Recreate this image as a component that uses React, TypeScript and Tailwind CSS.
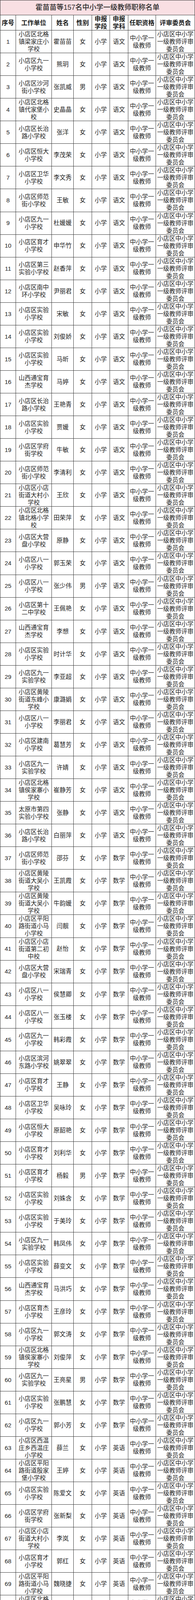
import React from "react";

type Row = [string, string, string, string];

const rows: Row[] = [
  ["小店区北格镇梁家庄小学校", "霍苗苗", "女", "语文"],
  ["小店区九一小学校", "熊玥", "女", "语文"],
  ["小店区沙河街小学校", "张凯威", "男", "语文"],
  ["小店区北格镇代家堡小校", "史晶晶", "女", "语文"],
  ["小店区长治路小学校", "张洋", "女", "语文"],
  ["小店区恒大小学校", "李茂荣", "女", "语文"],
  ["小店区卫华小学校", "李文秀", "女", "语文"],
  ["小店区师范街小学校", "王敏", "女", "语文"],
  ["小店区九一小学校", "杜媛媛", "女", "语文"],
  ["小店区育才小学校", "申华竹", "女", "语文"],
  ["小店区第三实验小学校", "赵香萍", "女", "语文"],
  ["小店区南中环小学校", "尹丽君", "女", "语文"],
  ["小店区实验小学校", "宋敏", "女", "语文"],
  ["小店区实验小学校", "刘俊娇", "女", "语文"],
  ["小店区实验小学校", "马昕", "女", "语文"],
  ["山西通宝育杰学校", "马婷", "女", "语文"],
  ["小店区长治路小学校", "王艳青", "女", "语文"],
  ["小店区实验小学校", "贾媛", "女", "语文"],
  ["小店区学府街学校", "牛敏", "女", "语文"],
  ["小店区师范街小学校", "李清利", "女", "语文"],
  ["小店区小店街道大村小学校", "王欣", "女", "语文"],
  ["小店区北格镇北格小学校", "田荣萍", "女", "语文"],
  ["小店区大营盘小学校", "原静", "女", "语文"],
  ["小店区八一小学校", "郭玉荣", "女", "语文"],
  ["小店区八一小学校", "张少伟", "男", "语文"],
  ["小店区第十二中学校", "王佩艳", "女", "语文"],
  ["山西通宝育杰学校", "李想", "女", "语文"],
  ["小店区实验小学校", "时计华", "女", "语文"],
  ["小店区九一实验学校", "李亚超", "女", "语文"],
  ["小店区黄陵街道东峰小学校", "康潞娟", "女", "语文"],
  ["小店区八一小学校", "李丽君", "女", "语文"],
  ["小店区建南小学校", "葛慧芳", "女", "语文"],
  ["小店区九一实验学校", "许婧", "女", "语文"],
  ["小店区北格镇侯家寨小学校", "崔静芳", "女", "语文"],
  ["太原市第四实验小学校", "张静", "女", "语文"],
  ["小店区长治路小学校", "白丽萍", "女", "语文"],
  ["小店区师范街小学校", "邵芬", "女", "数学"],
  ["小店区黄陵街道大吴小学校", "王凯霞", "女", "数学"],
  ["小店区黄陵街道大吴小学校", "牛韵媛", "女", "数学"],
  ["小店区平阳路街道小马小学校", "闫靓", "女", "数学"],
  ["小店区小店街道第二初中校", "赵怡", "女", "数学"],
  ["小店区大营盘小学校", "宋瑞青", "女", "数学"],
  ["小店区八一小学校", "侯慧卿", "女", "数学"],
  ["小店区八一小学校", "张玉楼", "女", "数学"],
  ["小店区九一小学校", "韩彩霞", "女", "数学"],
  ["小店区滨河东路小学校", "姚翠翠", "女", "数学"],
  ["小店区育才小学校", "王静", "女", "数学"],
  ["小店区卫华小学校", "吴咏玲", "女", "数学"],
  ["小店区恒大小学校", "原韶艳", "女", "数学"],
  ["小店区育才小学校", "刘利华", "女", "数学"],
  ["小店区育才小学校", "杨毅", "男", "数学"],
  ["小店区实验小学校", "刘姝含", "女", "数学"],
  ["小店区实验小学校", "于美玲", "女", "数学"],
  ["小店区九一实验学校", "韩凤伟", "女", "数学"],
  ["小店区实验小学校", "薛变文", "女", "数学"],
  ["山西通宝育杰学校", "马洪巧", "女", "数学"],
  ["小店区育杰小学校", "王彦玲", "女", "数学"],
  ["小店区九一小学校", "郭文涛", "女", "数学"],
  ["小店区北格镇侯家寨小学校", "刘俊萍", "女", "数学"],
  ["小店区九一实验学校", "王亮星", "男", "数学"],
  ["小店区实验小学校", "张鹏慧", "女", "数学"],
  ["小店区九一小学校", "郭小芳", "女", "数学"],
  ["小店区西温庄乡西温庄小学校", "薛兰", "女", "英语"],
  ["小店区平阳路街道殷家堡小学校", "王婷", "女", "英语"],
  ["小店区实验小学校", "陈爱文", "女", "英语"],
  ["小店区学府街学校", "张新梨", "女", "英语"],
  ["小店区小店街道大村小学校", "李岚", "女", "英语"],
  ["小店区育才小学校", "郭红", "女", "英语"],
  ["小店区平阳路街道小马小学校", "魏晓捷", "女", "英语"],
  ["小店区北格镇张花小学校", "张慧芳", "女", "英语"],
];

const headers = ["序号", "工作单位", "姓名", "性别", "申报学段", "申报学科", "任职资格", "评审委员会"];

// every cell draws its own right/bottom line; the grid draws left/top
const cell = "flex items-center justify-center text-center border-r border-b border-[#3a3a3a] px-0.5";

export default function App() {
  return (
    <div
      className="w-[500px] bg-white text-[#222]"
      style={{ fontFamily: '"Liberation Sans", "Noto Sans CJK SC", sans-serif' }}
    >
      <div className="grid grid-cols-[40px_92px_56px_47px_46px_47px_71px_100px] border-l border-t border-[#3a3a3a]">
        <div className="col-span-8 h-[38px] flex items-center justify-center bg-[#f9dfe3] border-r border-b border-[#3a3a3a] text-[18px] font-medium text-[#2b2b2b]">
          霍苗苗等157名中小学一级教师职称名单
        </div>

        {headers.map((h) => (
          <div key={h} className={`${cell} h-[39px] text-[16px] leading-[19px] font-bold text-[#1a1a1a]`}>
            {h}
          </div>
        ))}

        {rows.map(([unit, name, gender, subject], i) => (
          <React.Fragment key={i}>
            <div className={`${cell} h-[58.07px] text-[15.5px]`}>{i + 1}</div>
            <div className={`${cell} h-[58.07px] text-[15.5px] leading-[19px]`}>{unit}</div>
            <div className={`${cell} h-[58.07px] text-[15.5px]`}>{name}</div>
            <div className={`${cell} h-[58.07px] text-[15.5px]`}>{gender}</div>
            <div className={`${cell} h-[58.07px] text-[15.5px]`}>小学</div>
            <div className={`${cell} h-[58.07px] text-[15.5px]`}>{subject}</div>
            <div className={`${cell} h-[58.07px] text-[15.5px] leading-[19px]`}>中小学一级教师</div>
            <div className={`${cell} h-[58.07px] text-[15.5px] leading-[19px]`}>小店区中小学一级教师评审委员会</div>
          </React.Fragment>
        ))}
      </div>
    </div>
  );
}
